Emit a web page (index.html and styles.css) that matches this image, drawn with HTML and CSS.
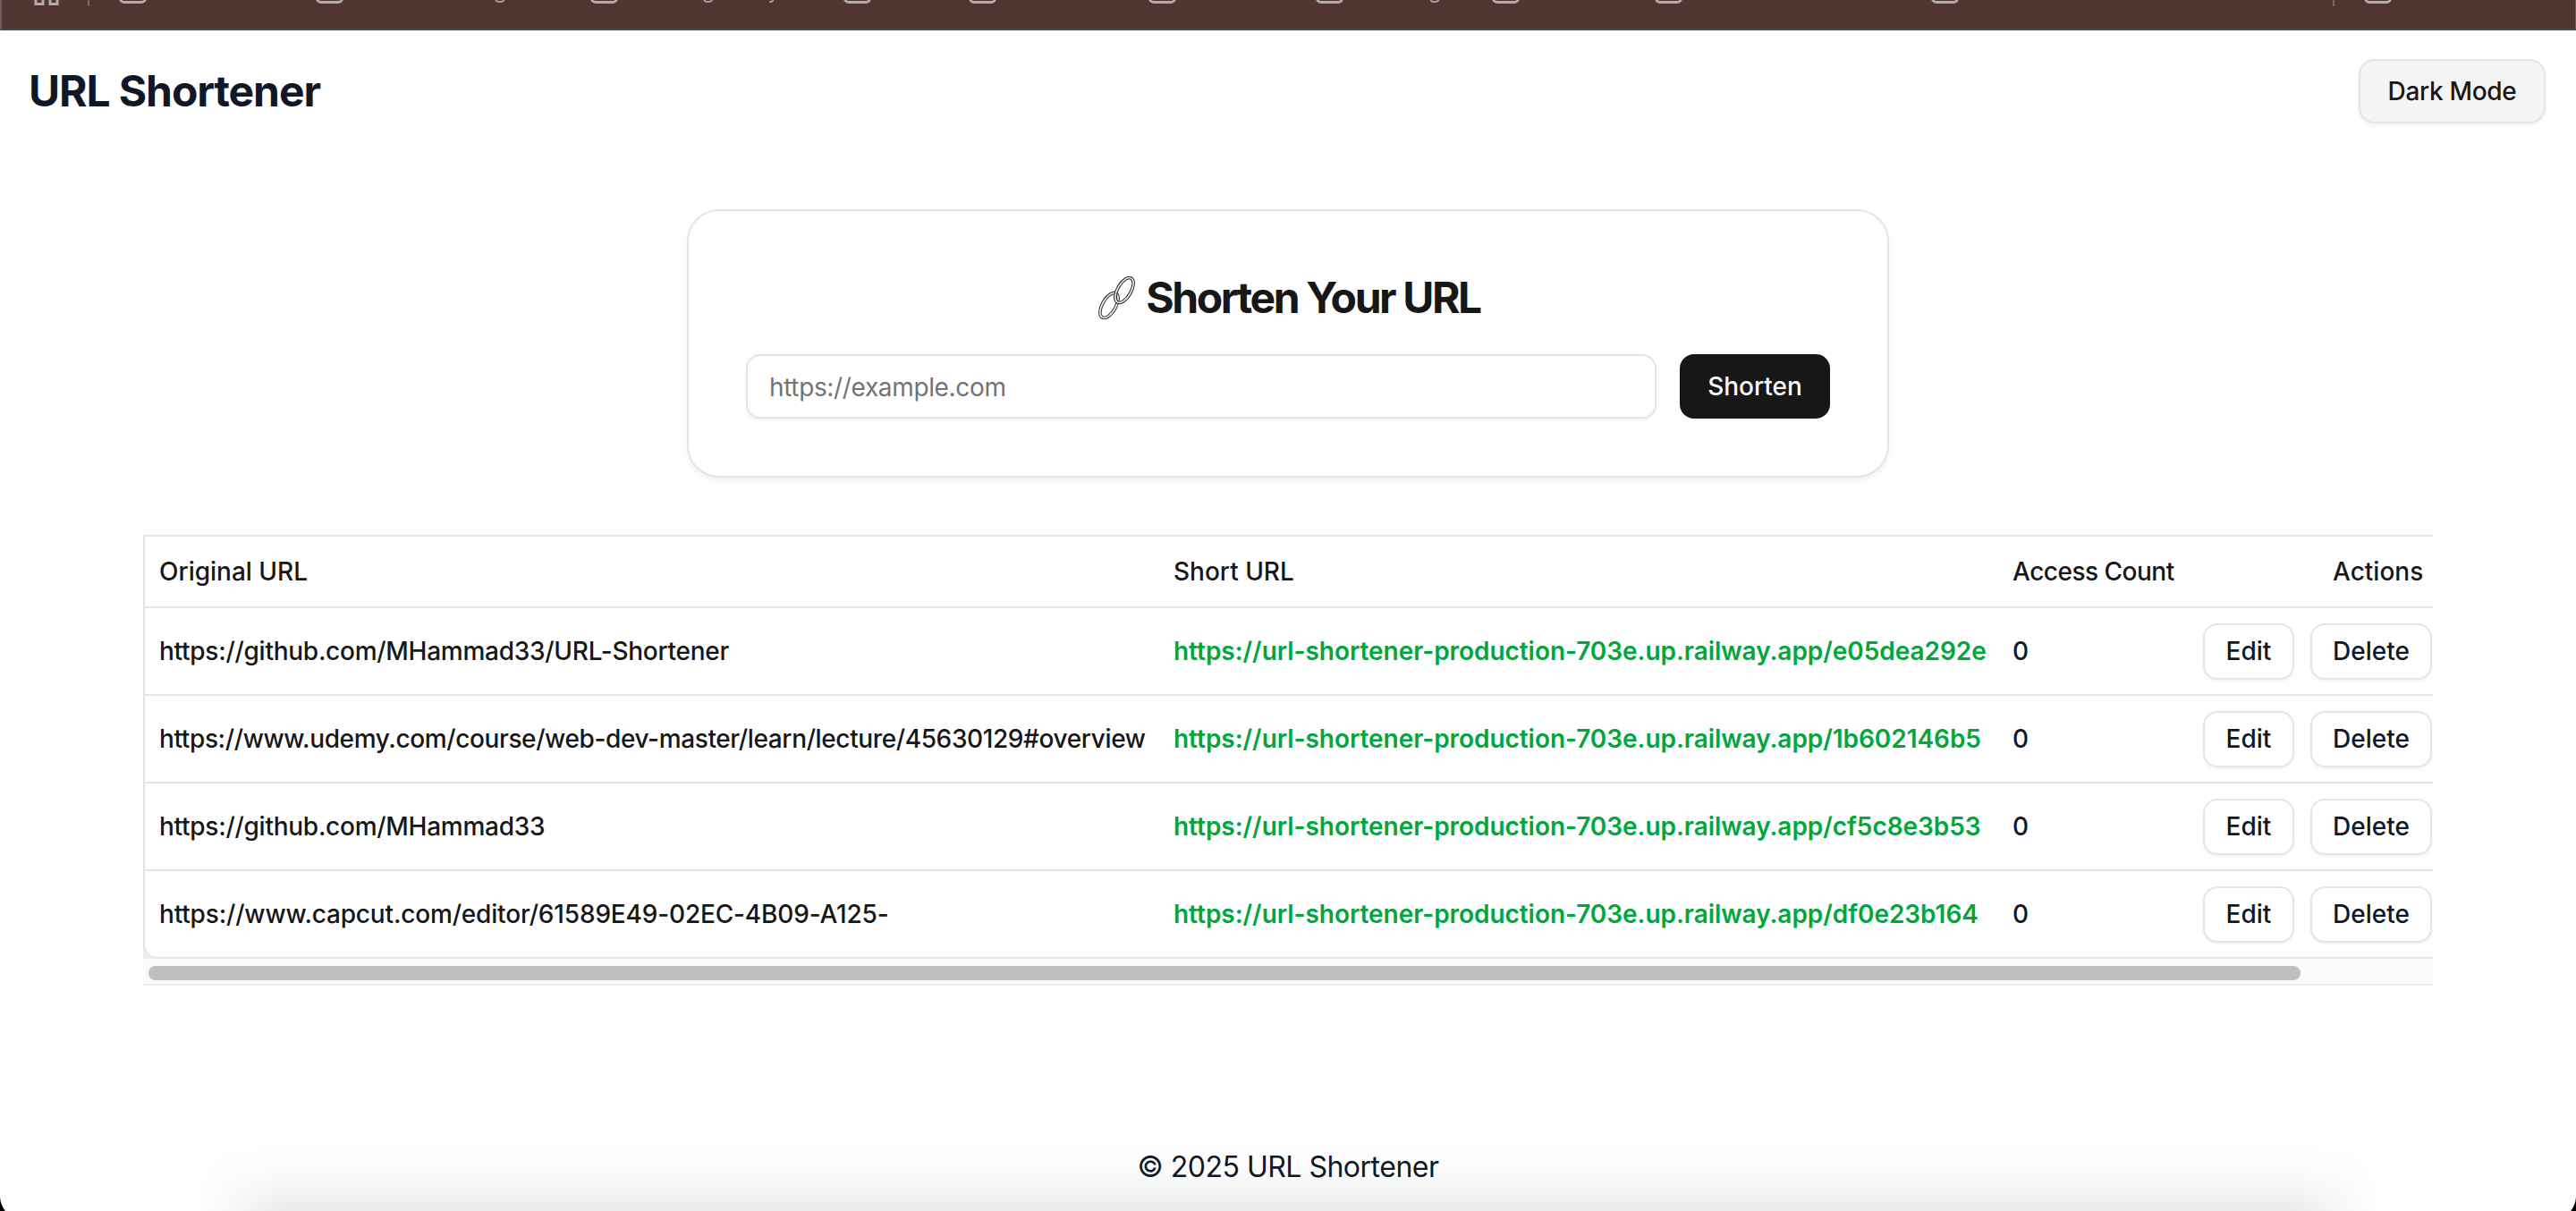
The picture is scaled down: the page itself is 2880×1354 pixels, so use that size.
FILE: index.html
```html
<!DOCTYPE html>
<html lang="en">
<head>
<meta charset="utf-8">
<title>URL Shortener</title>
<link rel="stylesheet" href="styles.css">
</head>
<body>
<div class="bookmarks">
  <svg class="apps" width="28" height="6" viewBox="0 0 28 6"><path d="M2 0v4.500h8V0M18 0v4.500h8V0" fill="none" stroke="#b4abaa" stroke-width="3"/></svg>
  <span class="sep"></span>
  <span class="bm b1"><i class="folder"></i><em>Outdated</em></span>
  <span class="bm b2"><i class="folder"></i><em>Frontend Design</em></span>
  <span class="bm b3"><i class="folder"></i><em>Tracking Study</em></span>
  <span class="bm b4"><i class="folder"></i><em>Dev</em></span>
  <span class="bm b5"><i class="folder"></i><em>Courses</em></span>
  <span class="bm b6"><i class="folder"></i><em>Work</em></span>
  <span class="bm b7"><i class="folder"></i><em>Learning</em></span>
  <span class="bm b8"><i class="folder"></i><em>Docs</em></span>
  <span class="bm b9"><i class="folder"></i><em>Notes</em></span>
  <span class="bm b10"><i class="folder"></i><em>Other</em></span>
  <span class="sep"></span>
  <span class="bm"><i class="folder"></i><em>All</em></span>
</div>

<header class="topbar">
  <h1 class="brand">URL Shortener</h1>
  <button class="theme-btn">Dark Mode</button>
</header>

<main class="page">
  <section class="card">
    <h2 class="card-title">
      <svg class="link-emoji" width="48" height="48" viewBox="0 0 48 48" aria-hidden="true">
        <g fill="none">
          <ellipse cx="15" cy="32.500" rx="7.500" ry="15.500" transform="rotate(30 15 32.500)" stroke="#2e2e2e" stroke-width="3.600"/>
          <ellipse cx="15" cy="32.500" rx="7.500" ry="15.500" transform="rotate(30 15 32.500)" stroke="#f2f2f2" stroke-width="1.600"/>
          <ellipse cx="32" cy="15.500" rx="7.500" ry="15.500" transform="rotate(30 32 15.500)" stroke="#222" stroke-width="3.600"/>
          <ellipse cx="32" cy="15.500" rx="7.500" ry="15.500" transform="rotate(30 32 15.500)" stroke="#f2f2f2" stroke-width="1.600"/>
        </g>
      </svg>
      <span>Shorten Your URL</span>
    </h2>
    <form class="shorten-form">
      <input class="url-input" type="text" placeholder="https://example.com">
      <button class="shorten-btn" type="button">Shorten</button>
    </form>
  </section>

  <div class="table-wrap">
    <div class="table-view">
      <table class="url-table">
        <colgroup><col class="c1"><col class="c2"><col class="c3"><col class="c4"></colgroup>
        <thead>
          <tr><th>Original URL</th><th>Short URL</th><th class="count-head">Access Count</th><th class="actions-head">Actions</th></tr>
        </thead>
        <tbody>
          <tr>
            <td>https://github.com/MHammad33/URL-Shortener</td>
            <td><a class="short" href="#">https://url-shortener-production-703e.up.railway.app/e05dea292e</a></td>
            <td class="count">0</td>
            <td><div class="row-actions"><button class="btn-edit">Edit</button><button class="btn-del">Delete</button></div></td>
          </tr>
          <tr>
            <td class="tight">https://www.udemy.com/course/web-dev-master/learn/lecture/45630129#overview</td>
            <td><a class="short" href="#">https://url-shortener-production-703e.up.railway.app/1b602146b5</a></td>
            <td class="count">0</td>
            <td><div class="row-actions"><button class="btn-edit">Edit</button><button class="btn-del">Delete</button></div></td>
          </tr>
          <tr>
            <td>https://github.com/MHammad33</td>
            <td><a class="short" href="#">https://url-shortener-production-703e.up.railway.app/cf5c8e3b53</a></td>
            <td class="count">0</td>
            <td><div class="row-actions"><button class="btn-edit">Edit</button><button class="btn-del">Delete</button></div></td>
          </tr>
          <tr>
            <td class="loose">https://www.capcut.com/editor/61589E49-02EC-4B09-A125-</td>
            <td><a class="short" href="#">https://url-shortener-production-703e.up.railway.app/df0e23b164</a></td>
            <td class="count">0</td>
            <td><div class="row-actions"><button class="btn-edit">Edit</button><button class="btn-del">Delete</button></div></td>
          </tr>
        </tbody>
      </table>
    </div>
    <div class="scroll-track"><div class="scroll-thumb"></div></div>
  </div>
</main>

<footer class="footer">© 2025 URL Shortener</footer>
<div class="dock-shadow"></div>
<div class="corner corner-l"></div>
<div class="corner corner-r"></div>
</body>
</html>
```
FILE: styles.css
```css
* { box-sizing: border-box; }
html, body { height: 100%; }
body {
  margin: 0;
  height: 1354px;
  overflow: hidden;
  position: relative;
  background: #fff;
  color: #171717;
  font-family: Inter, "Liberation Sans", sans-serif;
  font-size: 28px;
}
button { font-family: inherit; cursor: pointer; }

/* browser bookmarks bar, mostly cropped away */
.bookmarks {
  height: 34px;
  background: #513531;
  border-bottom: 2px solid #524644;
  border-left: 2px solid #6b5f5d;
  border-right: 1px solid #6b5f5d;
  display: flex;
  align-items: flex-start;
  padding-left: 36px;
  overflow: hidden;
  color: #b4abaa;
}
.apps { flex: none; }
.sep {
  flex: none;
  width: 2px;
  height: 7px;
  margin: 0 33px 0 32px;
  background: #7a6664;
}
.bm {
  flex: none;
  display: flex;
  gap: 10px;
  font-size: 24px;
  line-height: 28px;
  margin-top: -24px;
}
.bm em { font-style: normal; color: #a69c9b; }
.folder {
  width: 31px;
  height: 28px;
  border: 3px solid #b4abaa;
  border-radius: 6px;
  flex: none;
}
.b1 { width: 220px; }
.b2 { width: 307px; }
.b3 { width: 283px; }
.b4 { width: 140px; }
.b5 { width: 201px; }
.b6 { width: 187px; }
.b7 { width: 197px; }
.b8 { width: 182px; }
.b9 { width: 309px; }
.b10 { width: 417px; }

.topbar {
  height: 138px;
  padding: 32px 34px 0 32px;
  display: flex;
  justify-content: space-between;
  align-items: flex-start;
}
.brand {
  margin: 0;
  padding-top: 6px;
  font-size: 48px;
  line-height: 60px;
  font-weight: 700;
  letter-spacing: -1.1px;
  color: #101828;
}
.theme-btn {
  width: 209px;
  height: 72px;
  background: #f4f4f4;
  border: 2px solid #e5e5e5;
  border-radius: 18px;
  box-shadow: 0 2px 4px rgba(0,0,0,.06);
  font-size: 28px;
  font-weight: 500;
  letter-spacing: -.3px;
  color: #171717;
}

.page { display: flex; flex-direction: column; align-items: center; padding-top: 62px; }

.card {
  width: 1344px;
  height: 300px;
  padding: 65px 64px 0;
  border: 2px solid #e5e5e5;
  border-radius: 36px;
  background: #fff;
  box-shadow: 0 3px 6px rgba(0,0,0,.07);
}
.card-title {
  margin: 0 0 31px;
  height: 64px;
  display: flex;
  align-items: center;
  justify-content: center;
  gap: 8px;
  font-size: 48px;
  line-height: 64px;
  font-weight: 700;
  letter-spacing: -2.4px;
  color: #171717;
}
.shorten-form { display: flex; gap: 26px; }
.url-input {
  flex: 1;
  height: 72px;
  padding: 2px 24px 0;
  border: 2px solid #e5e5e5;
  border-radius: 16px;
  box-shadow: 0 2px 3px rgba(0,0,0,.06);
  font-family: inherit;
  font-size: 28px;
  letter-spacing: -.35px;
  background: #fff;
  outline: none;
}
.url-input::placeholder { color: #737373; opacity: 1; }
.shorten-btn {
  width: 168px;
  height: 72px;
  border: 0;
  border-radius: 16px;
  background: #171717;
  color: #fafafa;
  font-size: 28px;
  font-weight: 500;
}

.table-wrap { width: 2560px; margin-top: 64px; background: #ededed; }
.table-view {
  border-top: 2px solid #e5e5e5;
  border-left: 2px solid #e5e5e5;
  border-bottom: 2px solid #e5e5e5;
  border-radius: 0 0 0 16px;
  background: #fff;
  overflow: hidden;
}
.scroll-track {
  height: 30px;
  padding: 8px 0 0 6px;
  background: #fafafa;
  border-bottom: 2px solid #eeeeee;
}
.scroll-thumb {
  width: 2406px;
  height: 16px;
  border-radius: 8px;
  background: #bfbfbf;
}
.url-table { table-layout: fixed; width: 2712px; border-collapse: collapse; }
.c1 { width: 1134px; }
.c2 { width: 938px; }
.c3 { width: 213px; }
.c4 { width: 427px; }
.url-table th, .url-table td {
  padding: 0 16px;
  text-align: left;
  white-space: nowrap;
  font-size: 28px;
  color: #171717;
}
.url-table th { height: 79px; font-weight: 500; }
.url-table td { height: 98px; border-top: 2px solid #e5e5e5; font-weight: 450; letter-spacing: -.27px; }
.url-table tbody tr:last-child td { height: 97px; }
.url-table th.actions-head { padding-left: 161px; }
.url-table th.count-head { letter-spacing: -.5px; }
.url-table td.count { color: #101828; }
.url-table td.tight { letter-spacing: -.38px; }
.url-table td.loose { letter-spacing: -.17px; }
.short { color: #00a63e; font-weight: 600; letter-spacing: -.05px; text-decoration: none; }
.row-actions { display: flex; gap: 18px; }
.btn-edit, .btn-del {
  height: 63px;
  background: #fff;
  border: 2px solid #e5e5e5;
  border-radius: 16px;
  box-shadow: 0 2px 3px rgba(0,0,0,.05);
  font-size: 28px;
  font-weight: 500;
  letter-spacing: 0;
  color: #101828;
}
.btn-edit { width: 102px; }
.btn-del { width: 136px; }

.footer {
  position: absolute;
  left: 0; right: 0;
  top: 1286px;
  text-align: center;
  font-size: 32px;
  line-height: 38px;
  letter-spacing: -.5px;
  color: #101828;
  z-index: 2;
}
/* soft shadow of the window beneath, rising from the bottom edge */
.dock-shadow {
  position: absolute;
  left: 220px;
  right: 220px;
  top: 1272px;
  bottom: 0;
  background: linear-gradient(to bottom, rgba(20,25,40,0), rgba(20,25,40,.02) 45%, rgba(20,25,40,.09));
  -webkit-mask-image: linear-gradient(to right, transparent, #000 100px, #000 calc(100% - 100px), transparent);
  mask-image: linear-gradient(to right, transparent, #000 100px, #000 calc(100% - 100px), transparent);
}
.corner {
  position: absolute;
  bottom: 0;
  width: 8px;
  height: 18px;
  z-index: 3;
}
.corner-l { left: 0; background: radial-gradient(circle 27px at 27px 1px, transparent 26.500px, #000 27.500px); }
.corner-r { right: 0; background: radial-gradient(circle 27px at -19px 1px, transparent 26.500px, #000 27.500px); }
```
